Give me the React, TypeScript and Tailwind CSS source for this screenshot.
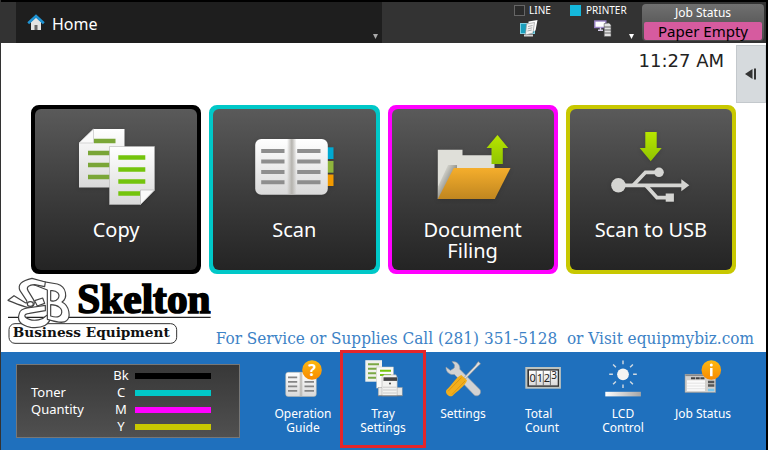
import { useState, type ReactNode } from 'react'

function Gradients() {
  return (
    <svg className="absolute h-0 w-0" aria-hidden="true">
      <defs>
        <linearGradient id="paper" x1="0" y1="0" x2="0" y2="1">
          <stop offset="0" stopColor="#ffffff" />
          <stop offset="1" stopColor="#d9d9d9" />
        </linearGradient>
        <linearGradient id="lime" x1="0" y1="0" x2="0" y2="1">
          <stop offset="0" stopColor="#b8e600" />
          <stop offset="1" stopColor="#8fc400" />
        </linearGradient>
        <linearGradient id="folder" x1="0" y1="0" x2="0" y2="1">
          <stop offset="0" stopColor="#f5ae2c" />
          <stop offset="1" stopColor="#c08620" />
        </linearGradient>
        <linearGradient id="badge" x1="0" y1="0" x2="0" y2="1">
          <stop offset="0" stopColor="#fdb913" />
          <stop offset="1" stopColor="#f78a00" />
        </linearGradient>
        <linearGradient id="spine" x1="0" y1="0" x2="1" y2="0">
          <stop offset="0" stopColor="#b5b3ae" stopOpacity="0" />
          <stop offset="0.5" stopColor="#b5b3ae" />
          <stop offset="1" stopColor="#b5b3ae" stopOpacity="0" />
        </linearGradient>
        <linearGradient id="bar" x1="0" y1="0" x2="1" y2="0">
          <stop offset="0" stopColor="#ffffff" />
          <stop offset="1" stopColor="#a5a5a5" />
        </linearGradient>
        <linearGradient id="fold-shade" gradientUnits="userSpaceOnUse" x1="5" y1="52" x2="16" y2="58">
          <stop offset="0" stopColor="#8a8a82" stopOpacity="0" />
          <stop offset="1" stopColor="#8a8a82" />
        </linearGradient>
      </defs>
    </svg>
  )
}

function CopyIcon() {
  return (
    <svg viewBox="0 0 80 80" className="size-20 drop-shadow-sm">
      <path d="M17.5 2H48.5V60.5H3V16Z" fill="url(#paper)" />
      <path d="M18 14H39.5M12 26H39M12 38H39M12 50H39" stroke="#7aa637" strokeWidth="4.4" />
      <path d="M17.5 2V16H3Z" fill="#fafafa" stroke="#c4c4c4" strokeWidth="0.7" />
      <path d="M33.5 19.5H78.5V63L64.5 77.5H33.5Z" fill="url(#paper)" stroke="#b5b5b5" strokeWidth="0.6" />
      <path d="M42.3 30.5H69.3M42.3 42.5H69.3M42.3 54.5H69.3M42.3 66.5H64" stroke="#74c40c" strokeWidth="4.4" />
      <path d="M64.5 77.5V63H78.5Z" fill="#fafafa" stroke="#b5b5b5" strokeWidth="0.7" />
    </svg>
  )
}

function ScanIcon() {
  return (
    <svg viewBox="0 0 80 80" className="size-20 drop-shadow-sm">
      <rect x="72" y="20.3" width="7.5" height="11.7" fill="#00a9d2" />
      <rect x="72" y="34" width="7.5" height="11.7" fill="#8fb53c" />
      <rect x="72" y="47.5" width="7.5" height="11.5" fill="#f29a00" />
      <rect x="1.2" y="12" width="72.6" height="55.7" rx="6" fill="url(#paper)" />
      <rect x="33" y="12" width="9.6" height="55.7" fill="url(#spine)" />
      <path
        d="M7.2 24H30.5M7.2 34.4H30.5M7.2 45H30.5M7.2 55.3H30.5M43.2 24H66.5M43.2 34.4H66.5M43.2 45H66.5M43.2 55.3H66.5"
        stroke="#8e8e8e"
        strokeWidth="4"
      />
    </svg>
  )
}

function FilingIcon() {
  return (
    <svg viewBox="0 0 80 80" className="size-20 drop-shadow-sm">
      <path d="M4.8 22.7H29.5V28.3H61.5V72H4.8Z" fill="#dfdfd9" />
      <path d="M4.8 60L15 38H24V50L4.8 72Z" fill="url(#fold-shade)" />
      <path d="M20.8 41H77.5L61.8 72H4.8Z" fill="url(#folder)" />
      <path d="M64.5 8L75.2 21H69.8V37H58.5V21H53.5Z" fill="url(#lime)" />
    </svg>
  )
}

function UsbIcon() {
  return (
    <svg viewBox="0 0 80 80" className="size-20 drop-shadow-sm">
      <path d="M34.3 5H45.7V21H50.7L39.7 34.3L28.7 21H34.3Z" fill="url(#lime)" />
      <g fill="none" stroke="#d5d5d2" strokeWidth="3.8">
        <path d="M7 58.3H71" />
        <path d="M22.5 58L34.5 45.3H48" />
        <path d="M35 58.5L46 70.7H56" />
      </g>
      <g fill="#d5d5d2">
        <circle cx="7.4" cy="58.3" r="7.2" />
        <circle cx="48" cy="45.3" r="4.8" />
        <path d="M70.3 52.3L78.3 58.3L70.3 64.3Z" />
        <rect x="54.7" y="66.5" width="8.2" height="8.2" />
      </g>
    </svg>
  )
}

function GuideIcon() {
  return (
    <svg viewBox="0 0 40 40" className="size-10">
      <rect x="2.7" y="13.3" width="30.6" height="24.2" rx="2.5" fill="url(#paper)" stroke="#b8b4a8" strokeWidth="0.5" />
      <rect x="16" y="13.3" width="4" height="24" fill="url(#spine)" />
      <path
        d="M5 18.3H14.2M5 22.8H14.2M5 27.3H14.2M5 31.8H14.2M21.5 22.8H31M21.5 27.3H31M21.5 31.8H31"
        stroke="#858585"
        strokeWidth="1.7"
      />
      <circle cx="29" cy="11" r="9.8" fill="url(#badge)" />
      <text x="29" y="16.5" textAnchor="middle" fontSize="16" fontWeight="700" fill="#fff">?</text>
    </svg>
  )
}

function TrayIcon() {
  return (
    <svg viewBox="0 0 40 40" className="size-10">
      <rect x="2.3" y="1.2" width="16.7" height="21.5" fill="#f1f1ec" />
      <path d="M5 5.2H16M5 9.8H14M5 14.3H13M5 18.8H13" stroke="#7ba845" strokeWidth="1.9" />
      <rect x="13.7" y="8" width="16.6" height="21" fill="#fafaf7" stroke="#c9c9c4" strokeWidth="0.5" />
      <path d="M17 11.8H28M17 16H28" stroke="#74c40c" strokeWidth="1.9" />
      <rect x="15.2" y="28.5" width="24" height="8.3" fill="#e9e9e6" stroke="#999" strokeWidth="0.5" />
      <path d="M19 17.5L21.5 15.8H33L34.2 18.5V36.8H19Z" fill="#f3f3f0" stroke="#a5a5a5" strokeWidth="0.5" />
      <rect x="20.5" y="18.3" width="13.5" height="3.6" fill="#444" />
      <path d="M20 28.2H33.5M20 31H33.5M20 34H33.5" stroke="#b3b3b3" strokeWidth="0.6" />
      <circle cx="27" cy="24.5" r="0.9" fill="#333" />
      <path d="M15.2 36.8H39.3" stroke="#777" strokeWidth="0.8" />
    </svg>
  )
}

function ToolsIcon() {
  return (
    <svg viewBox="0 0 40 40" className="size-10">
      <path
        d="M9 2.6C13.8 2 17.4 5.8 16.8 10.2L36.8 30.4C39.4 34 35.2 38.6 31.4 36.2L11.4 15.4C6.8 16.4 2.6 12.8 3 8L7.4 11.4L11.2 9L11.6 6Z"
        fill="#d2d2d2"
        stroke="#8f979f"
        strokeWidth="0.6"
      />
      <path d="M21 18.6L32.2 6.8L35.2 2.6L37.6 4.8L33.9 8.2L22.4 20Z" fill="#dedede" stroke="#888" strokeWidth="0.6" />
      <path d="M18.3 16L24 21.2C23 26.2 12.8 33.2 9.6 36.8C6.3 38.8 1.6 34.4 3.4 31C8.2 27 13.2 17.8 18.3 16Z" fill="#f2ae1c" />
      <path d="M5 32.3L18.5 18.5M8.8 35.6L22 22" stroke="#d28d0c" strokeWidth="0.7" />
    </svg>
  )
}

function CounterIcon() {
  return (
    <svg viewBox="0 0 40 40" className="size-10">
      <rect x="2.3" y="8" width="35.6" height="21.7" fill="#bcc3c0" />
      <rect x="4.4" y="10.2" width="31.6" height="17.6" fill="#333" />
      <rect x="6" y="11.6" width="28.7" height="14.8" fill="url(#paper)" />
      <path d="M13.2 11.6V26.4M20.3 11.6V26.4M27.4 11.6V26.4" stroke="#555" strokeWidth="0.8" />
      <g fontSize="11" textAnchor="middle" fill="#222">
        <text x="9.6" y="23">0</text>
        <text x="16.8" y="23">1</text>
        <text x="23.9" y="23">2</text>
        <text x="31.2" y="19.6" fontSize="10">3</text>
      </g>
    </svg>
  )
}

function LcdIcon() {
  return (
    <svg viewBox="0 0 40 40" className="size-10">
      <circle cx="20" cy="15.3" r="5.9" fill="#f5f5f3" />
      <path
        d="M20 5.2V1.6M20 25.4V29M9.9 15.3H6.2M30.1 15.3H33.8M12.9 8.2L10.1 5.4M27.1 8.2L29.9 5.4M12.9 22.4L10.1 25.2M27.1 22.4L29.9 25.2"
        stroke="#d3dbe2"
        strokeWidth="1.4"
      />
      <rect x="2.3" y="32.8" width="35.6" height="4.6" fill="url(#bar)" />
    </svg>
  )
}

function JobIcon() {
  return (
    <svg viewBox="0 0 40 40" className="size-10">
      <rect x="2" y="15.2" width="30.7" height="18.3" fill="#d2d0cd" stroke="#8e8e8e" strokeWidth="0.5" />
      <path d="M2.3 16.3H32" stroke="#8a8a8a" strokeWidth="1.6" />
      <path d="M8 19.3H22" stroke="#444" strokeWidth="2" strokeDasharray="4 0.7" />
      <rect x="4" y="21.3" width="18" height="10.6" fill="#fbfbfb" />
      <path d="M4 24.2H22M4 27H22M4 29.7H22" stroke="#d5d5d5" strokeWidth="0.6" />
      <path d="M25 23H31.3M25 26.6H31.3" stroke="#555" strokeWidth="2.5" />
      <path d="M25 31H31.3" stroke="#7cc8ec" strokeWidth="2.5" />
      <circle cx="28.3" cy="11" r="9.8" fill="url(#badge)" />
      <circle cx="28.3" cy="6" r="1.5" fill="#fff" />
      <path d="M28.3 9V17.2" stroke="#fff" strokeWidth="2.5" />
    </svg>
  )
}

function SkeltonLogo() {
  return (
    <svg viewBox="21 21 612 204" className="h-[68px] w-[204px]" role="img" aria-label="Skelton Business Equipment">
      <path d="M24 142H632" stroke="#222" strokeWidth="4" />
      <rect x="27" y="161" width="503" height="59" rx="18" fill="#fff" stroke="#333" strokeWidth="3" />
      <g fill="#fff" stroke="#444" strokeWidth="3.5" strokeLinejoin="round">
        <path d="M58 130C50 152 62 166 92 172C128 176 150 164 152 140L140 136C128 150 104 154 88 148C70 142 70 132 88 130L136 122V106L82 114C68 116 60 120 58 130Z" />
        <path d="M112 32L172 42C200 50 204 84 186 96C210 108 212 142 200 152C190 162 168 156 142 148V60L96 42Z" />
        <path d="M152 62C172 60 182 74 174 86C168 94 158 94 152 92ZM152 104C174 104 190 116 184 132C178 144 164 142 152 138Z" />
        <path d="M24 91L42 77L76 98C80 100 82 98 80 92L60 62C52 44 64 32 96 25L136 36L134 50L104 44C86 44 78 52 84 62L100 88C108 104 98 114 82 112C64 108 42 98 24 91Z" />
        <path d="M104 92L128 84L134 100L112 108Z" />
        <ellipse cx="91" cy="102" rx="9" ry="7" />
      </g>
      <text x="232" y="130" className="font-['Liberation_Serif',serif] font-bold" fontSize="124" fill="#000" stroke="#000" strokeWidth="5">
        Skelton
      </text>
      <text x="38" y="202" className="font-['DejaVu_Serif',serif] font-bold" fontSize="41" fill="#111">
        Business Equipment
      </text>
    </svg>
  )
}

interface Tile {
  label: string
  border: string
  icon: ReactNode
}

const tiles: Tile[] = [
  { label: 'Copy', border: 'border-black bg-black', icon: <CopyIcon /> },
  { label: 'Scan', border: 'border-[#00c8c8] bg-[#00c8c8]', icon: <ScanIcon /> },
  { label: 'Document Filing', border: 'border-[#ff00ff] bg-[#ff00ff]', icon: <FilingIcon /> },
  { label: 'Scan to USB', border: 'border-[#c8c800] bg-[#c8c800]', icon: <UsbIcon /> },
]

const toners = [
  { name: 'Bk', color: 'bg-black' },
  { name: 'C', color: 'bg-[#00c8c8]' },
  { name: 'M', color: 'bg-[#ff00ff]' },
  { name: 'Y', color: 'bg-[#c8c800]' },
]

const shortcuts = [
  { label: 'Operation Guide', labelClass: 'w-16', icon: <GuideIcon /> },
  { label: 'Tray Settings', labelClass: 'w-16', icon: <TrayIcon /> },
  { label: 'Settings', labelClass: 'w-16', icon: <ToolsIcon /> },
  { label: 'Total Count', labelClass: 'w-9 text-left', icon: <CounterIcon /> },
  { label: 'LCD Control', labelClass: 'w-16', icon: <LcdIcon /> },
  { label: 'Job Status', labelClass: 'w-20', icon: <JobIcon /> },
]

function Header() {
  return (
    <header className="flex h-[43px] border-t-2 border-black bg-[#333] pl-[15px] text-white">
      <div className="flex flex-1 items-center bg-[#1e1e1e] pl-[11px]">
        <svg viewBox="0 0 18 18" className="size-[18px]">
          <path d="M4 8L9 3.5L14 8V16H4Z" fill="#e3e3e3" />
          <path d="M1.2 9.2L9 2L16.8 9.2" fill="none" stroke="#1f93d3" strokeWidth="2.6" />
          <rect x="7.5" y="11" width="3" height="5" fill="#666" />
        </svg>
        <h1 className="ml-[7px] flex-1 pt-0.5 text-base leading-5">Home</h1>
        <button aria-label="Open menu" className="mr-1 self-end pb-1">
          <svg viewBox="0 0 5 5" className="size-[5px]">
            <path d="M0 0H5L2.5 5Z" fill="#aaa" />
          </svg>
        </button>
      </div>

      <div className="flex w-[384px] justify-end">
        <div className="w-14">
          <div className="flex items-center gap-1">
            <span className="size-[11px] border border-[#666] bg-[#2b2b2b]" />
            <span className="text-[10px] leading-4">LINE</span>
          </div>
          <svg viewBox="0 0 18 18" className="mt-0.5 ml-1.5 size-[18px]">
            <rect x="0.5" y="3.5" width="14" height="10" fill="#1a9fbd" stroke="#7fd0e2" />
            <path d="M4 15.5H13" stroke="#d5d5d5" strokeWidth="2" />
            <path d="M8.5 1.5L17.5 0L15.5 10.5L8 13Z" fill="#fff" />
            <path d="M6.5 4L14.5 2.5L13 13L5.5 15Z" fill="#f5f5f5" stroke="#888" strokeWidth="0.6" />
            <path d="M8 6.5L12.5 5.5M7.8 8.8L12.2 7.8M7.4 11L11.8 10" stroke="#999" strokeWidth="0.8" />
          </svg>
        </div>
        <div className="w-[59px]">
          <div className="flex items-center gap-[5px]">
            <span className="size-[11px] bg-[#15b8dc]" />
            <span className="text-[10px] leading-4">PRINTER</span>
          </div>
          <svg viewBox="0 0 18 18" className="mt-0.5 ml-6 size-[18px]">
            <rect x="0.8" y="1" width="11" height="6.5" fill="#fff" stroke="#9a83c6" strokeWidth="1.4" />
            <path d="M6.5 7.5V9.5M4 10.2H9" stroke="#d8d0ea" strokeWidth="1.4" />
            <path d="M10.2 3.5L15 3L17 5V16.5H10.2Z" fill="#e2e2e2" stroke="#555" strokeWidth="0.6" />
            <path d="M10.2 7H17M10.2 10H17M10.2 13H17" stroke="#555" strokeWidth="0.9" />
          </svg>
        </div>
        <button aria-label="Open device status" className="mr-2 self-end pb-1">
          <svg viewBox="0 0 5 5" className="size-[5px]">
            <path d="M0 0H5L2.5 5Z" fill="#fff" />
          </svg>
        </button>
        <button className="my-0.5 mr-0.5 flex w-[122px] flex-col rounded-sm bg-linear-to-b from-[#707070] to-[#4a4a4a] px-0.5 pb-px">
          <span className="w-full text-xs leading-[18px]">Job Status</span>
          <span className="w-full rounded-xs bg-[#d65b9f] text-[15px] leading-[18px] text-black">Paper Empty</span>
        </button>
      </div>
    </header>
  )
}

export default function App() {
  const [selected, setSelected] = useState('Tray Settings')

  return (
    <div className="flex min-h-screen flex-col border-r-2 border-l border-r-black border-l-[#333] bg-white font-['Noto_Sans',sans-serif]">
      <Gradients />
      <Header />

      <main>
        <div className="flex h-[62px] items-start justify-end gap-3 pt-0.5">
          <time className="pt-1 font-['DejaVu_Sans',sans-serif] text-lg leading-6 text-[#222]">11:27 AM</time>
          <button
            aria-label="Open side panel"
            className="flex h-[58px] w-[30px] items-center justify-center border border-[#c3c8cc] bg-[#d6dadd]"
          >
            <svg viewBox="0 0 12 12" className="size-3">
              <path d="M0 6L7.5 1V11Z" fill="#333" />
              <path d="M10 0.5V11.5" stroke="#333" strokeWidth="2" />
            </svg>
          </button>
        </div>

        <div className="grid grid-cols-4 gap-2 px-[30px]">
          {tiles.map(tile => (
            <button key={tile.label} className={`h-[169px] rounded-lg border-4 ${tile.border}`}>
              <span className="flex h-full flex-col items-center rounded-md bg-linear-to-b from-[#5a5a5a] to-[#242424] pt-[18px] text-xl leading-[21px] text-white">
                {tile.icon}
                <span className="w-32 pt-3">{tile.label}</span>
              </span>
            </button>
          ))}
        </div>

        <div className="flex h-[78px] items-end justify-between pr-3 pb-1 pl-1.5">
          <div className="self-start pt-[3px]">
            <SkeltonLogo />
          </div>
          <p className="font-['DejaVu_Serif_Condensed','DejaVu_Serif',serif] text-[17px] leading-5 whitespace-pre text-[#3c82c6]">
            For Service or Supplies Call (281) 351-5128  or Visit equipmybiz.com
          </p>
        </div>
      </main>

      <footer className="flex flex-1 items-start bg-[#1f70bd] pr-[23px] pl-[15px] text-white">
        <section className="mt-3 flex h-[74px] w-56 items-center border border-[#777] bg-linear-to-b from-[#383838] to-[#505050] pl-3.5 text-[13px] leading-[17px]">
          <h2 className="w-20">
            Toner
            <br />
            Quantity
          </h2>
          <ul>
            {toners.map(t => (
              <li key={t.name} className="flex items-center gap-1">
                <span className="w-5 text-center">{t.name}</span>
                <span className={`h-1.5 w-[76px] ${t.color}`} />
              </li>
            ))}
          </ul>
        </section>

        <nav className="ml-[23px] grid flex-1 grid-cols-6">
          {shortcuts.map(s => (
            <button
              key={s.label}
              onClick={() => setSelected(s.label)}
              className="relative flex h-24 flex-col items-center pt-[7px] text-xs leading-[14px]"
            >
              {s.icon}
              <span className={`pt-2 ${s.labelClass}`}>{s.label}</span>
              {selected === s.label && (
                <span className="absolute -inset-x-[3px] -top-0.5 bottom-0 border-3 border-[#e5262b]" />
              )}
            </button>
          ))}
        </nav>
      </footer>
    </div>
  )
}
